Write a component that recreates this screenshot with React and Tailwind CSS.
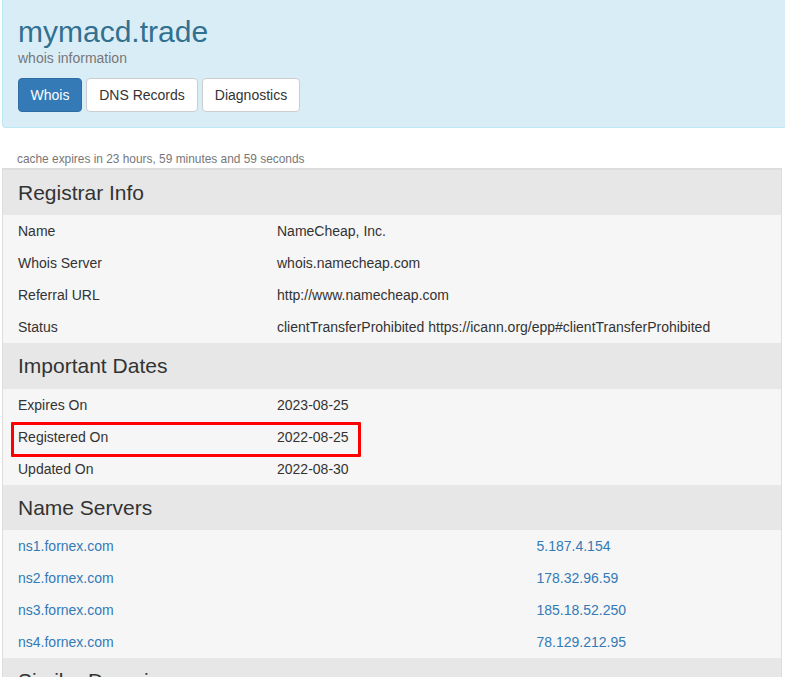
const sections = [
  { title: "Registrar Info", h: "h-[45px]", rows: [["Name", "NameCheap, Inc."], ["Whois Server", "whois.namecheap.com"], ["Referral URL", "http://www.namecheap.com"], ["Status", "clientTransferProhibited https://icann.org/epp#clientTransferProhibited"]] },
  { title: "Important Dates", h: "h-[46px]", rows: [["Expires On", "2023-08-25"], ["Registered On", "2022-08-25", true], ["Updated On", "2022-08-30"]] },
];
const servers = [["ns1.fornex.com", "5.187.4.154"], ["ns2.fornex.com", "178.32.96.59"], ["ns3.fornex.com", "185.18.52.250"], ["ns4.fornex.com", "78.129.212.95"]];

function Header({ title, h = "h-[45px]" }) {
  return <h4 className={`${h} flex items-center pl-[15px] bg-[#e6e7e6] text-[21px] text-[#333] font-normal`}>{title}</h4>;
}

export default function App() {
  return (
    <div className="h-[677px] overflow-hidden bg-white text-[14px] text-[#333]" style={{ fontFamily: '"Liberation Sans", Arial, sans-serif' }}>
      <div className="ml-[2px] h-[128px] bg-[#d9edf7] border-b border-l border-[#bce8f1] rounded-bl-[4px] pl-[15px] pt-[13px]">
        <h1 className="text-[30px] leading-[38px] text-[#31708f] font-normal">mymacd.trade</h1>
        <p className="text-[14px] leading-[16px] text-[#777] -mt-[1px]">whois information</p>
        <div className="flex gap-[4px] mt-[12px]">
          <button className="h-[34px] w-[64px] rounded-[4px] bg-[#337ab7] border border-[#2e6da4] text-white">Whois</button>
          <button className="h-[34px] w-[112px] rounded-[4px] bg-white border border-[#ccc] text-[#333]">DNS Records</button>
          <button className="h-[34px] w-[98px] rounded-[4px] bg-white border border-[#ccc] text-[#333]">Diagnostics</button>
        </div>
      </div>
      <p className="ml-[17px] mt-[24px] text-[11.9px] leading-[14px] h-[16px] text-[#777]">cache expires in 23 hours, 59 minutes and 59 seconds</p>
      <div className="relative ml-[2px] w-[780px] border-t-2 border-x border-[#ddd] bg-[#f6f6f6]">
        {sections.map((s) => (
          <section key={s.title}>
            <Header title={s.title} h={s.h} />
            {s.rows.map(([k, v, mark]) => (
              <div key={k} className="relative grid grid-cols-[259px_1fr] h-[32px] items-center pl-[15px]">
                {mark && <div className="absolute left-[8px] top-[1px] w-[350px] h-[35px] border-[3px] border-[#f00] rounded-[1px]" />}
                <span>{k}</span>
                <span>{v}</span>
              </div>
            ))}
          </section>
        ))}
        <section>
          <Header title="Name Servers" />
          {servers.map(([a, b]) => (
            <div key={a} className="grid grid-cols-[518.5px_1fr] h-[32px] items-center pl-[15px] text-[#337ab7]">
              <a>{a}</a>
              <a>{b}</a>
            </div>
          ))}
        </section>
        <Header title="Similar Domains" />
      </div>
    </div>
  );
}
